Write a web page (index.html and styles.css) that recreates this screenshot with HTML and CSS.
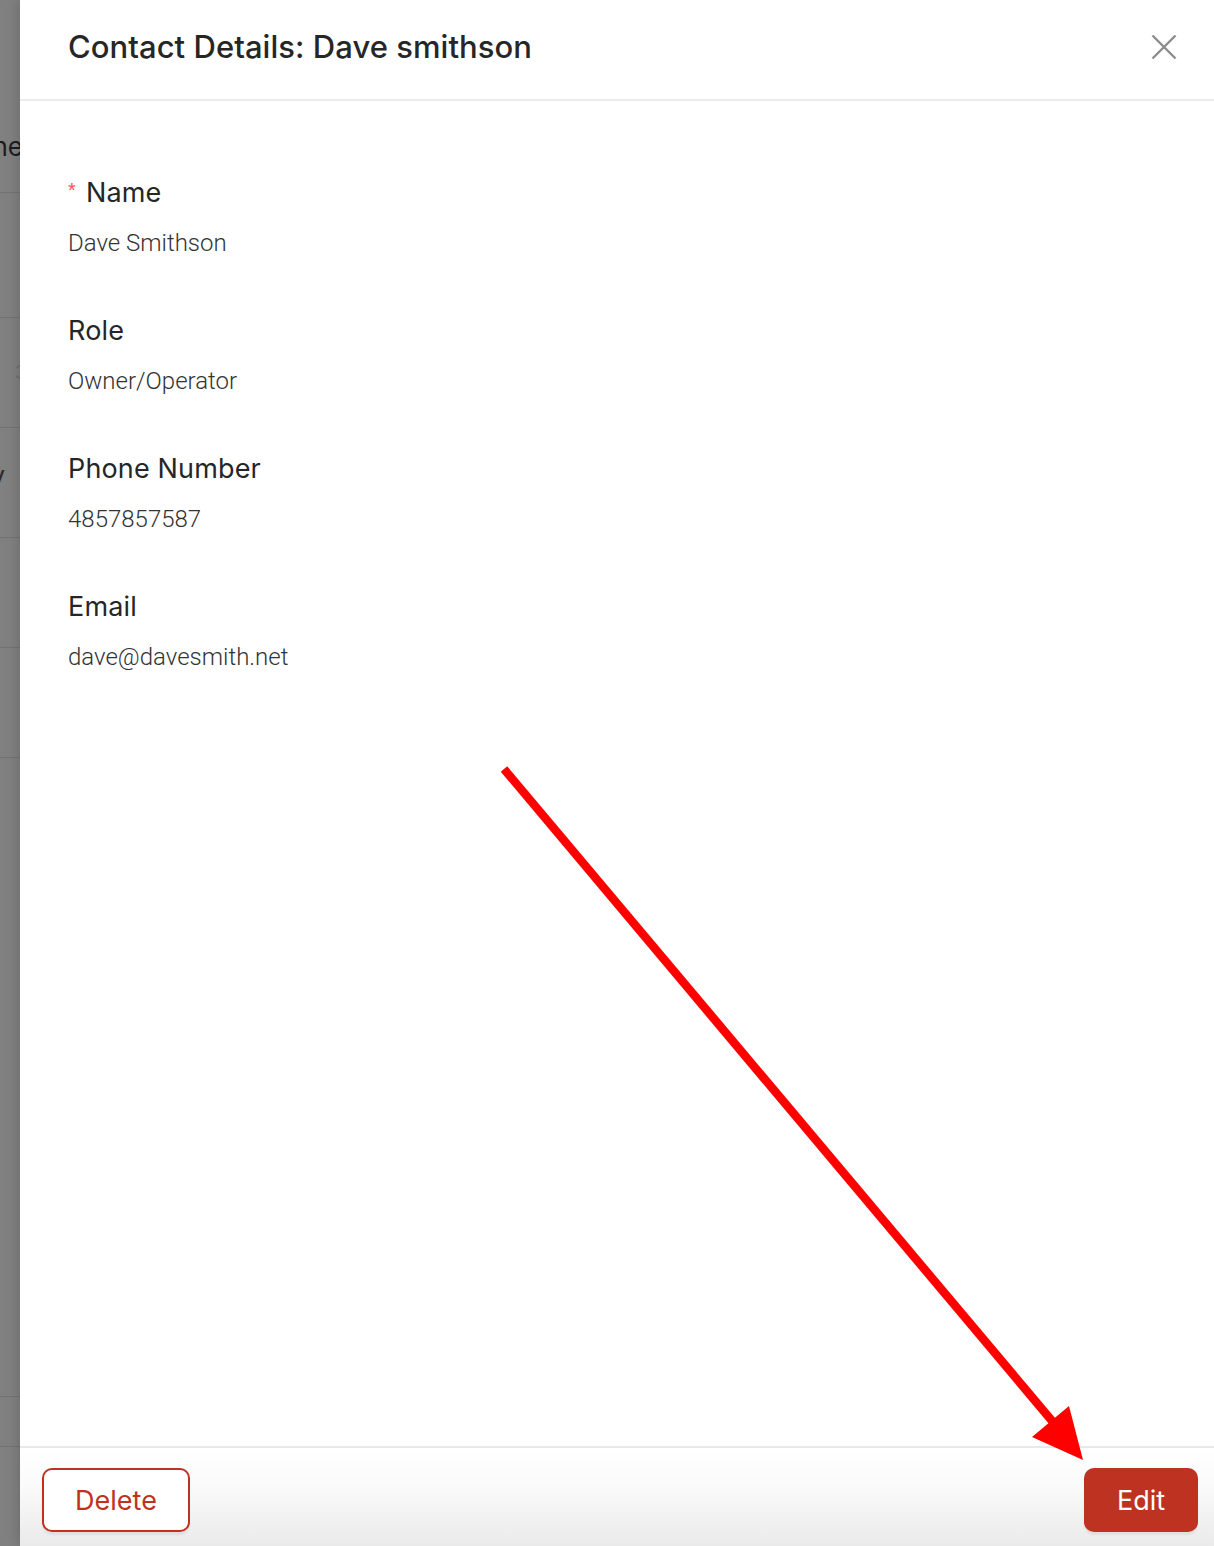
FILE: index.html
```html
<!DOCTYPE html>
<html>
<head>
<meta charset="utf-8">
<link rel="stylesheet" href="styles.css">
</head>
<body>
<div class="page">
  <div class="backdrop">
    <div class="bg-row r1"><span class="bg-text">ne</span></div>
    <div class="bg-row r2"></div>
    <div class="bg-row r3"><span class="bg-text small">3</span></div>
    <div class="bg-row r4"><span class="bg-text y">y</span></div>
    <div class="bg-row r4"></div>
    <div class="bg-row r4"></div>
    <div class="bg-row r5"></div>
    <div class="bg-row r6"></div>
  </div>
  <div class="drawer">
    <header class="drawer-header">
      <h1 class="title">Contact Details: Dave smithson</h1>
      <button class="close" aria-label="Close">
        <svg width="26" height="26" viewBox="0 0 26 26"><path d="M1.5 1.5 L24.5 24.5 M24.5 1.5 L1.5 24.5" stroke="#8c8c8c" stroke-width="2.4" fill="none"/></svg>
      </button>
    </header>
    <main class="drawer-body">
      <div class="field">
        <div class="label"><span class="req">*</span>Name</div>
        <div class="value">Dave Smithson</div>
      </div>
      <div class="field">
        <div class="label">Role</div>
        <div class="value">Owner/Operator</div>
      </div>
      <div class="field">
        <div class="label">Phone Number</div>
        <div class="value">4857857587</div>
      </div>
      <div class="field">
        <div class="label">Email</div>
        <div class="value">dave@davesmith.net</div>
      </div>
    </main>
    <footer class="drawer-footer">
      <button class="btn btn-outline">Delete</button>
      <button class="btn btn-primary">Edit</button>
    </footer>
  </div>
  <svg class="arrow" width="1214" height="1546" viewBox="0 0 1214 1546">
    <line x1="504" y1="769" x2="1058" y2="1428" stroke="#ff0000" stroke-width="8.5"/>
    <polygon points="1032,1437 1069,1406 1083,1460" fill="#ff0000"/>
  </svg>
</div>
</body>
</html>
```
FILE: styles.css
```css
* { box-sizing: border-box; }
html, body { margin: 0; padding: 0; }
body {
  width: 1214px;
  height: 1546px;
  overflow: hidden;
  font-family: Inter, "Noto Sans", "Liberation Sans", sans-serif;
  background: #fff;
}
.page {
  position: relative;
  display: flex;
  width: 1214px;
  height: 1546px;
}
.backdrop {
  width: 20px;
  flex: none;
  background: #808080;
  display: flex;
  flex-direction: column;
  overflow: hidden;
}
.bg-row {
  border-bottom: 1px solid #737373;
  display: flex;
  align-items: center;
  justify-content: flex-end;
  flex: none;
}
.r1 { height: 193px; padding-top: 100px; }
.r2 { height: 125px; }
.r3 { height: 110px; }
.r4 { height: 110px; }
.r5 { height: 639px; }
.r6 { height: 50px; }
.bg-text {
  font-size: 26px;
  color: #1c1c1c;
  margin-right: -3px;
}
.bg-text.small { font-size: 18px; color: #6e6e6e; margin-right: -6px; }
.bg-text.y { margin-right: 15px; margin-bottom: 14px; color: #2a2a2a; }
.drawer {
  flex: 1;
  display: flex;
  flex-direction: column;
  background: #fff;
  box-shadow: -4px 0 10px rgba(0,0,0,0.12);
}
.drawer-header {
  height: 101px;
  flex: none;
  display: flex;
  align-items: center;
  justify-content: space-between;
  padding: 0 37px 6px 48px;
  border-bottom: 2px solid #ececec;
}
.title {
  margin: 0;
  font-size: 31px;
  font-weight: 500;
  color: #262626;
  letter-spacing: 0.05px;
}
.close {
  border: 0;
  background: none;
  padding: 0;
  width: 26px;
  height: 26px;
  display: flex;
}
.drawer-body {
  flex: 1;
  padding: 76px 48px 0;
  display: flex;
  flex-direction: column;
  gap: 55px;
}
.field {
  display: flex;
  flex-direction: column;
  gap: 17px;
}
.label {
  font-size: 27px;
  letter-spacing: 0.15px;
  color: #262626;
  line-height: 32px;
  display: flex;
  align-items: center;
}
.req {
  color: #ff4d4f;
  font-size: 20px;
  margin-right: 10px;
  font-family: "Liberation Sans", sans-serif;
  position: relative;
  top: -3px;
}
.value {
  font-family: Roboto, "Liberation Sans", sans-serif;
  font-weight: 300;
  font-size: 24px;
  line-height: 34px;
  color: #333;
}
.drawer-footer {
  height: 100px;
  flex: none;
  border-top: 2px solid #e9e9e9;
  background: linear-gradient(#fff 0%, #fafafa 40%, #eaeaea 100%);
  display: flex;
  align-items: flex-start;
  justify-content: space-between;
  padding: 20px 16px 0 22px;
}
.btn {
  height: 64px;
  border-radius: 10px;
  font-family: Inter, "Noto Sans", sans-serif;
  font-size: 27px;
  padding: 0 30px;
  box-shadow: 0 3px 2px rgba(0,0,0,0.06);
}
.btn-outline {
  width: 148px;
  background: #fff;
  border: 2px solid #c0321f;
  color: #c0321f;
}
.btn-primary {
  width: 114px;
  background: #bd3220;
  border: 0;
  color: #fff;
}
.arrow {
  position: absolute;
  left: 0;
  top: 0;
  pointer-events: none;
}
```
